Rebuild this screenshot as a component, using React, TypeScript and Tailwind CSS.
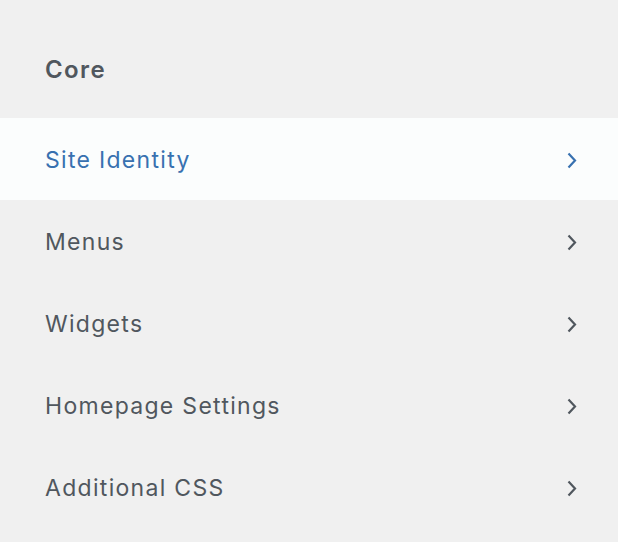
import React from 'react';

const items = ['Site Identity', 'Menus', 'Widgets', 'Homepage Settings', 'Additional CSS'];

const Chevron = ({ className }: { className: string }) => (
  <svg width="10" height="17" viewBox="0 0 10 17" fill="none" className={className}>
    <path d="M1.5 1.5 L8 8.5 L1.5 15.5" stroke="currentColor" strokeWidth="2.2" />
  </svg>
);

export default function App() {
  return (
    <div
      className="w-full min-h-[542px] bg-[#f0f0f0] text-[#50575e]"
      style={{ fontFamily: 'Inter, "Liberation Sans", sans-serif' }}
    >
      <div className="h-[118px] flex items-center pl-[45px] pt-[22px]">
        <h3 className="text-[24px] font-semibold tracking-[1.4px] text-[#50575e]">Core</h3>
      </div>
      <ul>
        {items.map((label, i) => {
          const active = i === 0;
          return (
            <li
              key={label}
              className={`h-[82px] flex items-center justify-between pl-[45px] pr-[41px] pt-[2px] ${
                active ? 'bg-[#fbfdfd] text-[#3871b0]' : 'text-[#50575e]'
              }`}
            >
              <span className="text-[23px] tracking-[1.3px]">{label}</span>
              <Chevron className={active ? 'text-[#3871b0]' : 'text-[#50575e]'} />
            </li>
          );
        })}
      </ul>
    </div>
  );
}
